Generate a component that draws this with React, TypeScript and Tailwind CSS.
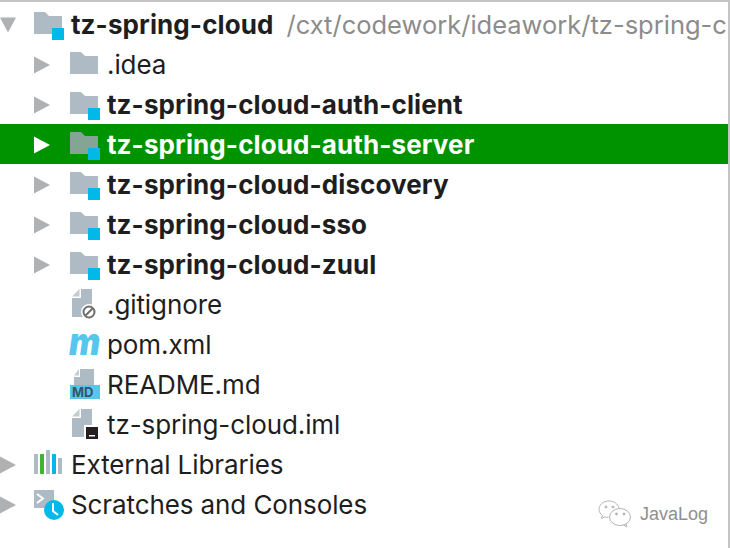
import React from "react";

const FOLDER = "M0 0H11L15 4H28V22H0Z";

function Arrow({ open, white }: { open?: boolean; white?: boolean }) {
  const fill = white ? "#ffffff" : "#afb1b3";
  if (open) {
    return (
      <svg width="16" height="16" viewBox="0 0 16 16" className="shrink-0">
        <path d="M0 0.5H16L8 15.5Z" fill={fill} />
      </svg>
    );
  }
  return (
    <svg width="16" height="18" viewBox="0 0 16 18" className="shrink-0">
      <path d="M0 0.5L16 9L0 17.5Z" fill={fill} />
    </svg>
  );
}

function FolderIcon({ module, dim }: { module?: boolean; dim?: boolean }) {
  return (
    <svg width="32" height="28" viewBox="0 0 32 28" className="shrink-0">
      <path d={FOLDER} fill={dim ? "#84a593" : "#aebbc4"} />
      {module && <rect x="18" y="16" width="12" height="12" fill="#00b9e8" />}
    </svg>
  );
}

function FileIcon({ badge }: { badge: "ignore" | "term" }) {
  return (
    <svg width="32" height="32" viewBox="0 0 32 32" className="shrink-0">
      <path d="M11 0H22V28H2V9H11Z" fill="#aebbc4" />
      <path d="M2 7.5L9.5 0V7.5Z" fill="#c3ccd3" />
      {badge === "ignore" && (
        <g>
          <circle cx="19" cy="23" r="8" fill="#fff" />
          <circle cx="19" cy="23" r="5.5" fill="none" stroke="#6e6e6e" strokeWidth="2" />
          <path d="M15.5 26.5L22.5 19.500" stroke="#6e6e6e" strokeWidth="2" />
        </g>
      )}
      {badge === "term" && (
        <g>
          <rect x="14" y="16" width="16" height="16" fill="#fff" />
          <rect x="16" y="18" width="12" height="12" fill="#231f20" />
          <rect x="19" y="26" width="6" height="1.5" fill="#fff" />
        </g>
      )}
    </svg>
  );
}

function MdIcon() {
  return (
    <div className="relative w-[30px] h-[32px] shrink-0">
      <svg width="30" height="32" viewBox="0 0 30 32" className="absolute left-0 top-0">
        <path d="M10 0H24V18H4V8H10Z" fill="#aebbc4" />
        <path d="M4 6.5L9 0V6.5Z" fill="#c3ccd3" />
        <rect x="0" y="16" width="30" height="14" fill="#55c6ee" />
      </svg>
      <span className="absolute left-[2px] top-[16px] text-[13px] leading-[15px] font-bold text-[#3a5566] font-['Inter',sans-serif]">
        MD
      </span>
    </div>
  );
}

function MavenIcon() {
  return (
    <span className="block w-[36px] shrink-0 origin-left scale-x-[0.85] text-[#55c6ee] text-[39px] leading-[32px] font-black italic font-['Inter',sans-serif] -mt-[8px] -ml-[1px] text-left tracking-[-1px]">
      m
    </span>
  );
}

function LibIcon() {
  return (
    <svg width="28" height="24" viewBox="0 0 28 24" className="shrink-0 -mt-[6px]">
      <rect x="0" y="4" width="4" height="20" fill="#aebbc4" />
      <rect x="6" y="4" width="4" height="20" fill="#3fb62f" />
      <rect x="12" y="0" width="4" height="24" fill="#aebbc4" />
      <rect x="18" y="4" width="4" height="20" fill="#00b9e8" />
      <rect x="24" y="8" width="4" height="16" fill="#aebbc4" />
    </svg>
  );
}

function ScratchIcon() {
  return (
    <svg width="30" height="30" viewBox="0 0 30 30" className="shrink-0">
      <rect x="0" y="0" width="20" height="18" fill="#aebbc4" />
      <path d="M3 4L9 8.5L3 13" fill="none" stroke="#fff" strokeWidth="2" />
      <circle cx="20" cy="20" r="10" fill="#00b9e8" />
      <path d="M19 13V21L24 25" fill="none" stroke="#fff" strokeWidth="2" />
    </svg>
  );
}

function Row({
  arrow,
  children,
  indent,
  green,
}: {
  arrow?: React.ReactNode;
  children: React.ReactNode;
  indent?: boolean;
  green?: boolean;
}) {
  return (
    <div
      className={`flex items-center h-[40px] ${green ? "-mt-px mb-px pt-[2px] bg-[#009300] text-white" : "text-[#1e1e1e]"}`}
    >
      {indent && <div className="w-[34px] shrink-0" />}
      <div className={`${indent ? "w-[36px]" : "w-[34px]"} shrink-0 flex items-center`}>{arrow}</div>
      {children}
    </div>
  );
}

function Label({ bold, children }: { bold?: boolean; children: React.ReactNode }) {
  return (
    <span
      className={`whitespace-nowrap text-[26px] leading-[40px] ${bold ? "font-bold tracking-[0.1px]" : "tracking-[-0.1px]"}`}
    >
      {children}
    </span>
  );
}

export default function App() {
  return (
    <div className="relative w-[730px] h-[548px] overflow-hidden bg-white font-['Inter',sans-serif] border-t-2 border-r-2 border-[#c4c4c4]">
      <div className="pt-[3px]">
        <Row arrow={<Arrow open />}>
          <div className="w-[37px] shrink-0 mt-[2px]">
            <FolderIcon module />
          </div>
          <Label bold>tz-spring-cloud</Label>
          <span className="ml-[13px] whitespace-nowrap text-[25.5px] text-[#8c8c8c]">
            /cxt/codework/ideawork/tz-spring-c
          </span>
        </Row>
        <Row indent arrow={<Arrow />}>
          <div className="w-[37px] shrink-0 mt-[2px]">
            <FolderIcon />
          </div>
          <Label>.idea</Label>
        </Row>
        {["auth-client", "auth-server", "discovery", "sso", "zuul"].map((n) => (
          <Row key={n} indent green={n === "auth-server"} arrow={<Arrow white={n === "auth-server"} />}>
            <div className="w-[37px] shrink-0 mt-[2px]">
              <FolderIcon module dim={n === "auth-server"} />
            </div>
            <Label bold>tz-spring-cloud-{n}</Label>
          </Row>
        ))}
        <Row indent>
          <div className="w-[37px] shrink-0">
            <FileIcon badge="ignore" />
          </div>
          <Label>.gitignore</Label>
        </Row>
        <Row indent>
          <div className="w-[37px] shrink-0">
            <MavenIcon />
          </div>
          <Label>pom.xml</Label>
        </Row>
        <Row indent>
          <div className="w-[37px] shrink-0">
            <MdIcon />
          </div>
          <Label>README.md</Label>
        </Row>
        <Row indent>
          <div className="w-[37px] shrink-0">
            <FileIcon badge="term" />
          </div>
          <Label>tz-spring-cloud.iml</Label>
        </Row>
        <Row arrow={<Arrow />}>
          <div className="w-[37px] shrink-0">
            <LibIcon />
          </div>
          <Label>External Libraries</Label>
        </Row>
        <Row arrow={<Arrow />}>
          <div className="w-[37px] shrink-0">
            <ScratchIcon />
          </div>
          <Label>Scratches and Consoles</Label>
        </Row>
      </div>
      <div className="absolute left-[598px] top-[498px] flex items-center gap-[8px] text-[#8f8f8f]">
        <svg width="34" height="28" viewBox="0 0 34 28" fill="none" stroke="#b5b5b5" strokeWidth="1">
          <path d="M21 8C20 4 16 1 11 1C5 1 1 5 1 9.500C1 12 2.500 14 4.500 15.500L3.500 18.500L7 16.800C8 17.200 9 17.400 10.500 17.400" />
          <ellipse cx="22" cy="17" rx="10.500" ry="8.500" />
          <path d="M28 24L29 27L25.500 25" />
          <circle cx="8" cy="7" r="1" fill="#b5b5b5" />
          <circle cx="15" cy="7" r="1" fill="#b5b5b5" />
          <circle cx="18.500" cy="14" r="1" fill="#b5b5b5" />
          <circle cx="26" cy="14" r="1" fill="#b5b5b5" />
        </svg>
        <span className="text-[18px] font-['Liberation_Sans',sans-serif]">JavaLog</span>
      </div>
    </div>
  );
}
